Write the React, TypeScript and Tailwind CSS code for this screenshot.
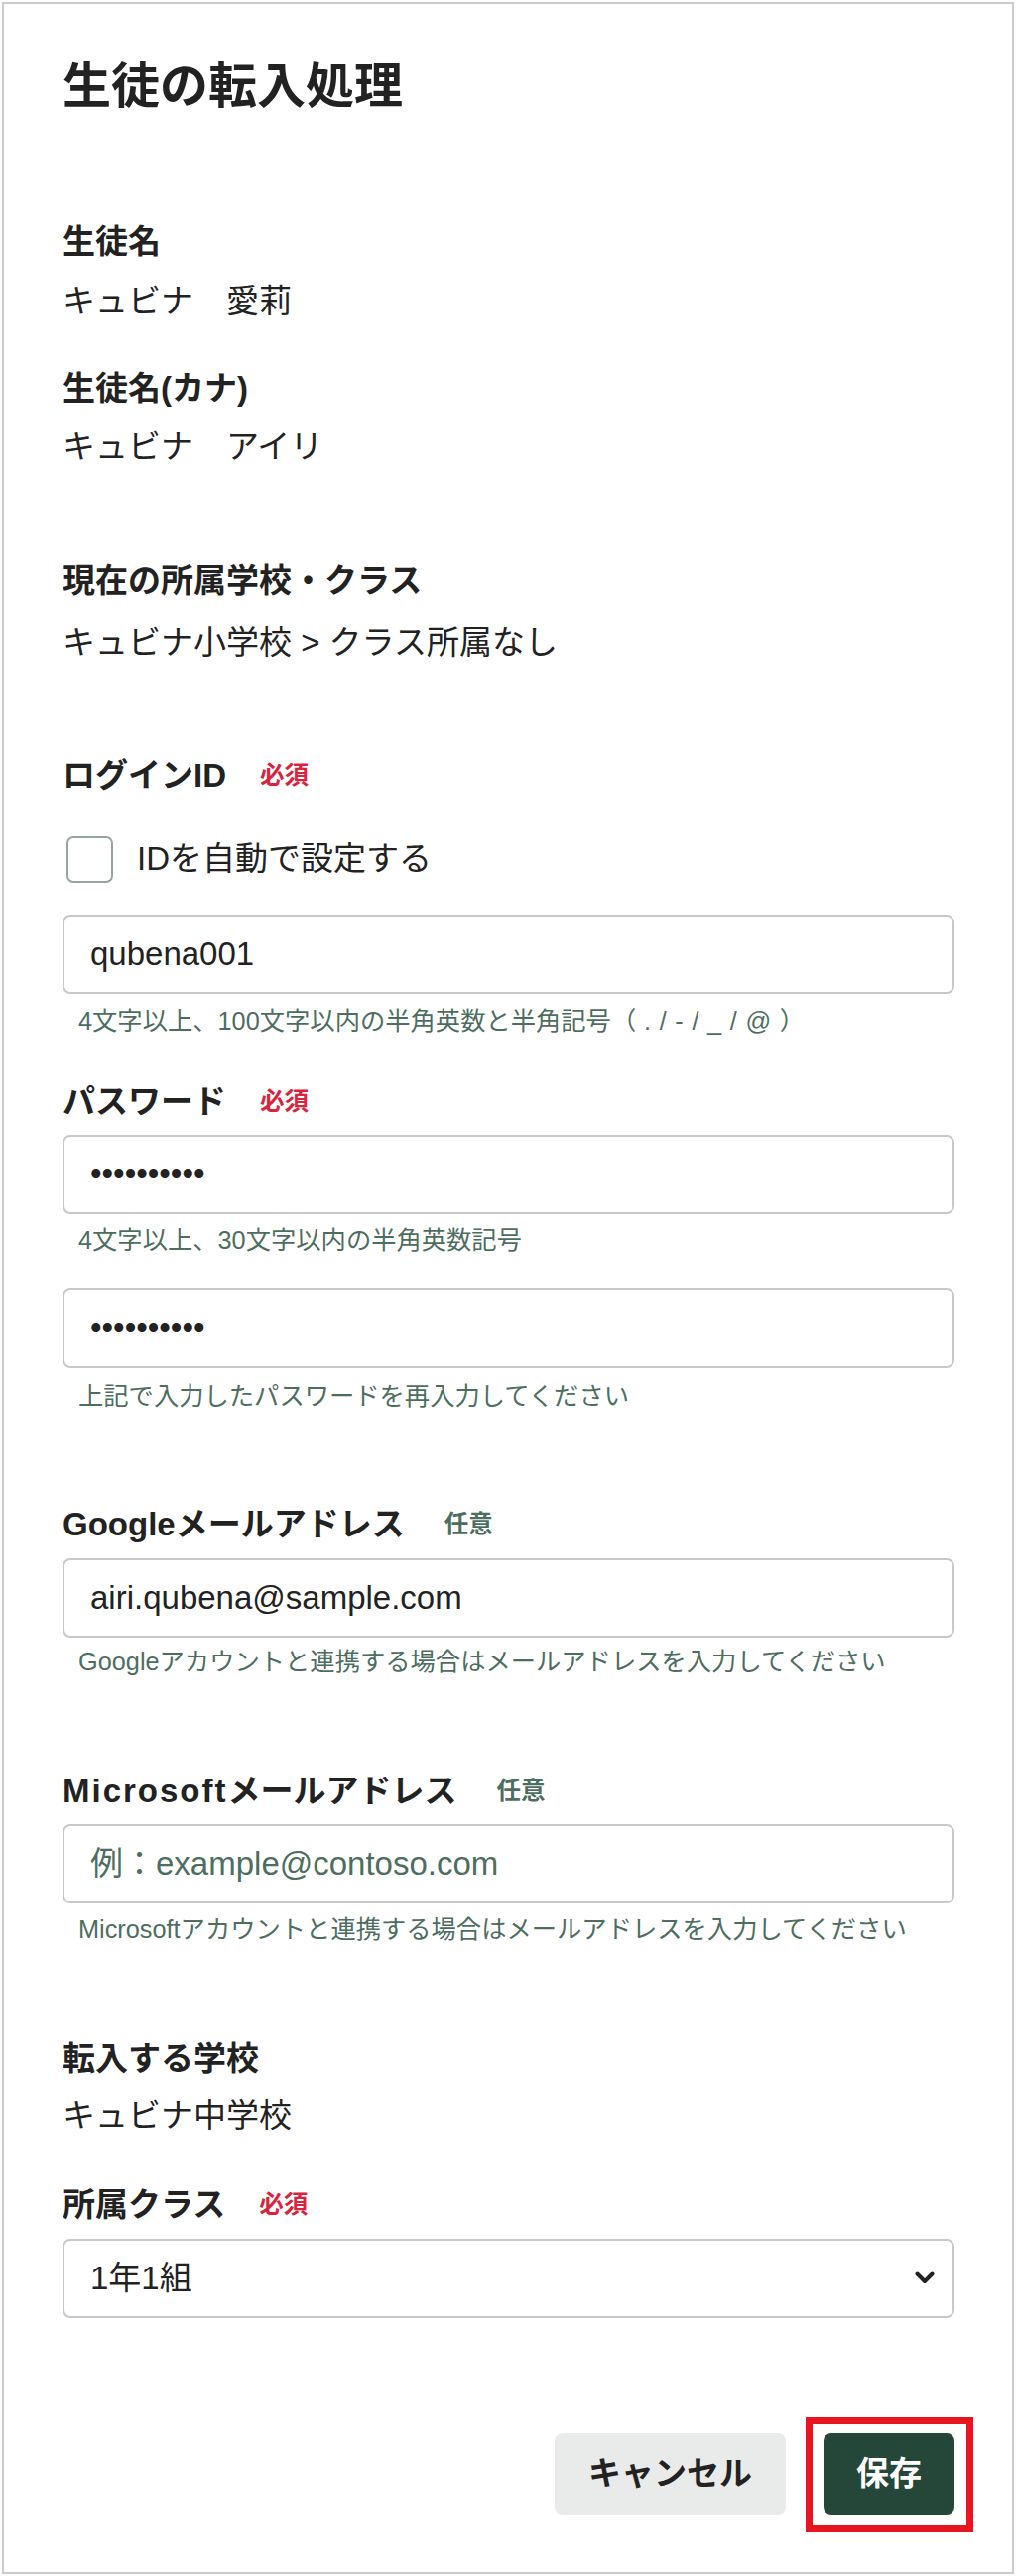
import { useState } from 'react';

const FONT = { fontFamily: '"Liberation Sans", "Noto Sans CJK JP", sans-serif' };

function Badge({ kind }: { kind: 'required' | 'optional' }) {
  return kind === 'required' ? (
    <span className="ml-[34px] text-[24.5px] leading-[32px] font-bold text-[#d9243e]">必須</span>
  ) : (
    <span className="ml-[40px] text-[24.5px] leading-[32px] font-bold text-[#4d6e5f]">任意</span>
  );
}

function Label({ children, badge, className = '' }: { children: React.ReactNode; badge?: 'required' | 'optional'; className?: string }) {
  return (
    <div className={`flex items-center h-[40px] ${className}`}>
      <span className="text-[33px] leading-[40px] font-bold text-[#222]">{children}</span>
      {badge && <Badge kind={badge} />}
    </div>
  );
}

function Value({ children, className = '' }: { children: React.ReactNode; className?: string }) {
  return <div className={`text-[33px] leading-[40px] text-[#222] ${className}`}>{children}</div>;
}

function Help({ children, className = '' }: { children: React.ReactNode; className?: string }) {
  return <p className={`pl-[16px] text-[25.3px] leading-[32px] text-[#4d6e5f] ${className}`}>{children}</p>;
}

function Field({ value, type = 'text', placeholder, className = '' }: { value?: string; type?: string; placeholder?: string; className?: string }) {
  const [v, setV] = useState(value ?? '');
  return (
    <input
      type={type}
      value={v}
      placeholder={placeholder}
      onChange={(e) => setV(e.target.value)}
      style={FONT}
      className={`block w-full h-[80px] rounded-[8px] border-2 border-[#c8c8c8] bg-white px-[26px] text-[33px] text-[#222] placeholder:text-[#4d6e5f] outline-none ${className}`}
    />
  );
}

export default function App() {
  const [auto, setAuto] = useState(false);
  const [cls, setCls] = useState('1-1');

  return (
    <div className="p-[2px] bg-white" style={FONT}>
      <div className="h-[2593px] border-2 border-[#cbcbcb] bg-white pt-[53px] pl-[59px] pr-[58px] flex flex-col">
        <h1 className="text-[49px] leading-[60px] font-bold text-[#222]">生徒の転入処理</h1>

        <Label className="mt-[107px]">生徒名</Label>
        <Value className="mt-[20px]">キュビナ　愛莉</Value>

        <Label className="mt-[48px]">生徒名(カナ)</Label>
        <Value className="mt-[19px]">キュビナ　アイリ</Value>

        <Label className="mt-[95px]">現在の所属学校・クラス</Label>
        <Value className="mt-[22px]">キュビナ小学校 &gt; クラス所属なし</Value>

        <Label className="mt-[94px]" badge="required">ログインID</Label>
        <label className="mt-[40px] flex items-center h-[48px] cursor-pointer" onClick={() => setAuto(!auto)}>
          <span className={`ml-[4px] w-[47px] h-[47px] rounded-[7px] border-2 border-[#94a69f] ${auto ? 'bg-[#25473a]' : 'bg-white'}`} />
          <span className="ml-[24px] text-[33px] leading-[40px] text-[#222]">IDを自動で設定する</span>
        </label>
        <Field className="mt-[32px]" value="qubena001" />
        <Help className="mt-[11px]">
          4文字以上、100文字以内の半角英数と半角記号（<span className="tracking-[0.8px]"> . / - / _ / @ </span>）
        </Help>

        <Label className="mt-[46px]" badge="required">パスワード</Label>
        <Field className="mt-[13px]" type="password" value="qubena0001" />
        <Help className="mt-[10px]">4文字以上、30文字以内の半角英数記号</Help>
        <Field className="mt-[33px]" type="password" value="qubena0001" />
        <Help className="mt-[12px]">上記で入力したパスワードを再入力してください</Help>

        <Label className="mt-[94px]" badge="optional">Googleメールアドレス</Label>
        <Field className="mt-[14px]" value="airi.qubena@sample.com" />
        <Help className="mt-[8px]">Googleアカウントと連携する場合はメールアドレスを入力してください</Help>

        <Label className="mt-[95px]" badge="optional">
          <span className="tracking-[2px]">Microsoft</span>メールアドレス
        </Label>
        <Field className="mt-[13px]" placeholder="例：example@contoso.com" />
        <Help className="mt-[10px]">Microsoftアカウントと連携する場合はメールアドレスを入力してください</Help>

        <Label className="mt-[95px]">転入する学校</Label>
        <Value className="mt-[17px]">キュビナ中学校</Value>

        <Label className="mt-[50px]" badge="required">所属クラス</Label>
        <div className="relative mt-[14px]">
          <select
            value={cls}
            onChange={(e) => setCls(e.target.value)}
            style={FONT}
            className="block w-full h-[80px] appearance-none rounded-[8px] border-2 border-[#c8c8c8] bg-white pl-[26px] pr-[60px] text-[33px] text-[#222] outline-none"
          >
            <option value="1-1">1年1組</option>
            <option value="1-2">1年2組</option>
            <option value="1-3">1年3組</option>
          </select>
          <svg className="pointer-events-none absolute right-[20px] top-[33px]" width="20" height="14" viewBox="0 0 20 14" fill="none">
            <polyline points="2.5,2.5 10,10 17.5,2.5" stroke="#222" strokeWidth="4" strokeLinecap="round" strokeLinejoin="round" />
          </svg>
        </div>

        <div className="mt-[116px] flex justify-end gap-[38px]">
          <button className="h-[82px] px-[34px] rounded-[8px] bg-[#e9ebea] text-[33px] font-bold text-[#222]">キャンセル</button>
          <div className="relative">
            <button className="h-[82px] px-[33px] rounded-[8px] bg-[#25473a] text-[33px] font-bold text-white">保存</button>
            <span className="pointer-events-none absolute -left-[18px] -right-[19px] -top-[16px] -bottom-[18px] border-[7px] border-[#e8141e]" />
          </div>
        </div>
      </div>
    </div>
  );
}
